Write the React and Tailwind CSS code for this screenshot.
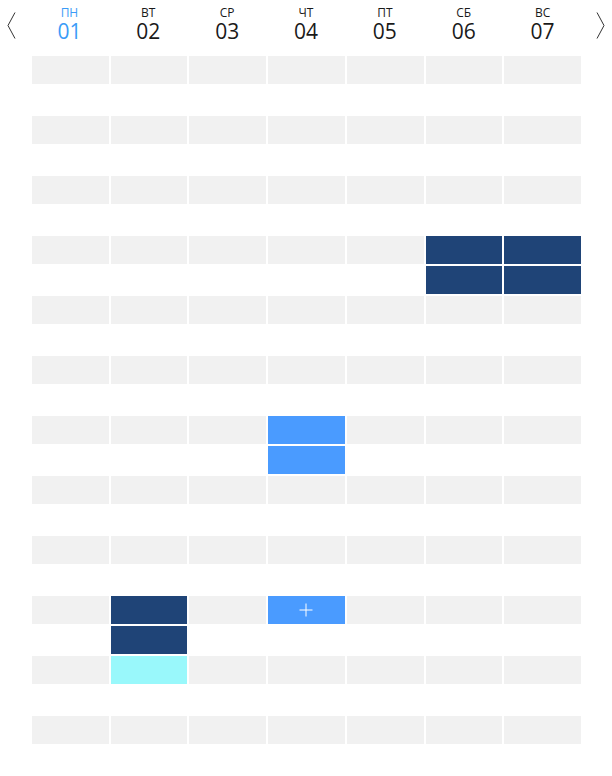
import { useState } from "react";

const days = [
  { short: "ПН", num: "01" },
  { short: "ВТ", num: "02" },
  { short: "СР", num: "03" },
  { short: "ЧТ", num: "04" },
  { short: "ПТ", num: "05" },
  { short: "СБ", num: "06" },
  { short: "ВС", num: "07" },
];

// key: "row-col" -> booked kind
const booked = {
  "6-5": "dark",
  "6-6": "dark",
  "7-5": "dark",
  "7-6": "dark",
  "12-3": "light",
  "13-3": "light",
  "18-1": "dark",
  "18-3": "add",
  "19-1": "dark",
  "20-1": "cyan",
};

const ROWS = 23;

function Cell({ row, col }) {
  const kind = booked[`${row}-${col}`];
  const base = row % 2 === 0 ? "bg-[#f1f1f1]" : "bg-white";
  if (kind === "dark") return <div className="h-[28px] bg-[#1f4477]" />;
  if (kind === "cyan") return <div className="h-[28px] bg-[#99f8fb]" />;
  if (kind === "light") return <div className="h-[28px] bg-[#4a9bff]" />;
  if (kind === "add")
    return (
      <div className="h-[28px] bg-[#4a9bff] flex items-center justify-center">
        <svg width="14" height="14" viewBox="0 0 14 14" aria-hidden="true">
          <path d="M7 0.5v13M0.5 7h13" stroke="white" strokeWidth="1" />
        </svg>
      </div>
    );
  return <div className={`h-[28px] ${base}`} />;
}

export default function App() {
  const [selected] = useState(0);

  return (
    <div className="w-[612px] h-[776px] bg-white flex font-['Open_Sans',sans-serif]">
      {/* prev */}
      <div className="w-[32px] flex justify-start pl-[7px] pt-[12px]">
        <svg width="9" height="27" viewBox="0 0 9 27" aria-hidden="true">
          <polyline points="8,0.5 1,13.5 8,26.5" fill="none" stroke="#333" strokeWidth="1" />
        </svg>
      </div>

      <div className="w-[549px] flex flex-col">
        {/* header */}
        <div className="grid grid-cols-7 gap-[2px] h-[56px] -ml-[1px]">
          {days.map((d, i) => (
            <div
              key={d.num}
              className={`flex flex-col items-center pt-[6px] ${
                i === selected ? "text-[#3a9bf7]" : "text-[#1a1a1a]"
              }`}
            >
              <span className="text-[12px] leading-[14px]">{d.short}</span>
              <span className="text-[21px] leading-[24px] -mt-[1px]">{d.num}</span>
            </div>
          ))}
        </div>

        {/* slots */}
        <div className="flex flex-col gap-[2px]">
          {Array.from({ length: ROWS }).map((_, r) => (
            <div key={r} className="grid grid-cols-7 gap-[2px]">
              {days.map((d, c) => (
                <Cell key={d.num} row={r} col={c} />
              ))}
            </div>
          ))}
        </div>
      </div>

      {/* next */}
      <div className="w-[31px] flex justify-start pl-[15px] pt-[12px]">
        <svg width="9" height="27" viewBox="0 0 9 27" aria-hidden="true">
          <polyline points="1,0.5 8,13.5 1,26.5" fill="none" stroke="#333" strokeWidth="1" />
        </svg>
      </div>
    </div>
  );
}
